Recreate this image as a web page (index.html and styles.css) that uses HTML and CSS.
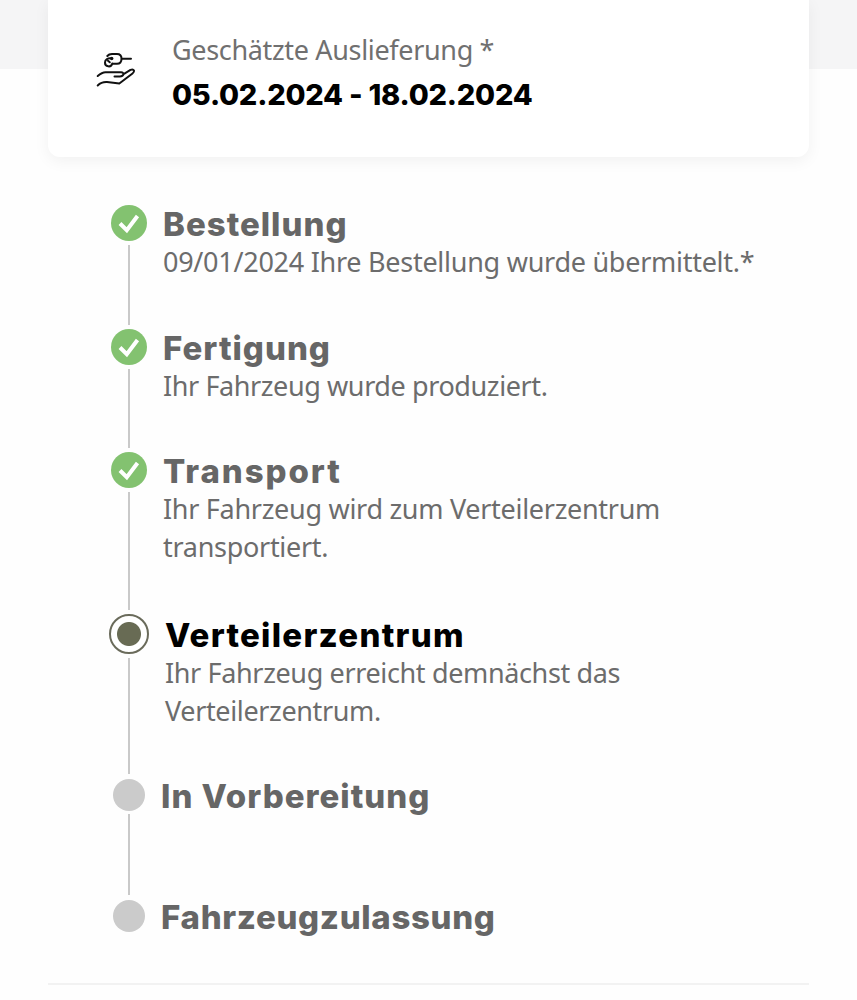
FILE: index.html
```html
<!DOCTYPE html>
<html lang="de">
<head>
<meta charset="utf-8">
<title>Bestellstatus</title>
<link rel="stylesheet" href="styles.css">
</head>
<body>
<header class="hero">
  <section class="card">
    <svg class="delivery-icon" viewBox="0 0 40 38" aria-hidden="true">
      <path d="M11.300 6Q13 4 16 4H21Q25.500 4 25.500 8.700Q25.500 13.700 21 13.700H17"/>
      <path d="M26 8.700H35M15.700 8.400C12 7.600 9 9.500 9 12.500A3.700 3.700 0 0 0 16.300 13.500M12 10.800L13.800 12.300"/>
      <circle class="solid" cx="15.700" cy="8.500" r="1.700"/>
      <path d="M1.700 26Q6 22.200 9.500 22.200H25Q27.800 22.300 27.300 24.600Q26.700 26.400 24 26.400H18.500M28 23.800L34.500 19.900Q37 18.800 38 20.500Q38.400 22 36.500 23.500L23.300 33.500L11 32.100Q5.500 31.800 1.700 35.500"/>
    </svg>
    <div class="estimate">
      <p class="label">Geschätzte Auslieferung *</p>
      <p class="dates">05.02.2024 - 18.02.2024</p>
    </div>
  </section>
</header>
<main class="steps">
  <article class="step done">
    <div class="rail"><span class="marker"><svg viewBox="0 0 36 36"><path d="M9 18.500L15.800 25.200L26.500 11"/></svg></span><i class="line"></i></div>
    <div class="copy"><h2 class="t1">Bestellung</h2><p class="p1">09/01/2024 Ihre Bestellung wurde übermittelt.*</p></div>
  </article>
  <article class="step done produced">
    <div class="rail"><span class="marker"><svg viewBox="0 0 36 36"><path d="M9 18.500L15.800 25.200L26.500 11"/></svg></span><i class="line"></i></div>
    <div class="copy"><h2 class="t2">Fertigung</h2><p class="p2">Ihr Fahrzeug wurde produziert.</p></div>
  </article>
  <article class="step done transport">
    <div class="rail"><span class="marker"><svg viewBox="0 0 36 36"><path d="M9 18.500L15.800 25.200L26.500 11"/></svg></span><i class="line"></i></div>
    <div class="copy"><h2 class="t3">Transport</h2><p class="p3">Ihr Fahrzeug wird zum Verteilerzentrum<br>transportiert.</p></div>
  </article>
  <article class="step current">
    <div class="rail"><span class="marker"></span><i class="line"></i></div>
    <div class="copy"><h2 class="t4">Verteilerzentrum</h2><p class="p4">Ihr Fahrzeug erreicht demnächst das<br>Verteilerzentrum.</p></div>
  </article>
  <article class="step pending">
    <div class="rail"><span class="marker"></span><i class="line"></i></div>
    <div class="copy"><h2 class="t5">In Vorbereitung</h2></div>
  </article>
  <article class="step pending last">
    <div class="rail"><span class="marker"></span></div>
    <div class="copy"><h2 class="t6">Fahrzeugzulassung</h2></div>
  </article>
</main>
</body>
</html>
```
FILE: styles.css
```css
* { box-sizing: border-box; }
body { margin: 0; height: 1000px; overflow: hidden; background: #fefefe; color: #666; font-family: "Noto Sans", sans-serif; }
h2, p { margin: 0; white-space: nowrap; }
.hero { height: 203px; padding: 0 48px; background: linear-gradient(#f5f5f6 69px, #fefefe 69px); }
.card { display: flex; height: 157px; padding: 31px 48px 0; border-radius: 0 0 12px 12px; background: #fff; box-shadow: 0 4px 16px rgba(0,0,0,.055); }
.delivery-icon { width: 40px; height: 38px; margin-top: 19px; fill: none; stroke: #111; stroke-width: 2; stroke-linecap: round; stroke-linejoin: round; }
.delivery-icon .solid { fill: #111; stroke: none; }
.estimate { margin-left: 36px; }
.label { color: #707070; font-size: 27px; line-height: 38px; letter-spacing: -.34px; }
.dates { margin-top: 7px; color: #000; font: 800 29px/38px Inter, sans-serif; letter-spacing: -.22px; }
.steps { height: 782px; margin: 0 48px; padding-left: 61px; border-bottom: 2px solid #f2f2f2; }
.step { display: flex; height: 123.500px; }
.transport { height: 164px; }
.current { height: 160.500px; }
.pending { height: 121.500px; }
.rail { display: flex; flex-direction: column; align-items: center; width: 40px; }
.marker { display: block; flex-shrink: 0; width: 36px; height: 36px; margin: 2px 0; border-radius: 50%; background: #83c270; }
.marker svg { display: block; fill: none; stroke: #fff; stroke-width: 4; }
.line { flex: 1; width: 2px; margin: 2px 0; background: #c9c9c9; }
.transport .line { margin-bottom: 4px; }
.current .marker { width: 40px; height: 40px; margin: 0; border: 2px solid #6a6b5b; background: #fff radial-gradient(circle, #686b54 11.500px, transparent 12.500px); }
.current .line { margin: 4px 0 1px; }
.pending .marker { width: 32px; height: 32px; margin: 4px 0; background: #cbcbcb; }
.pending .line { margin: -1px 0 1px; }
.copy { margin-left: 14px; }
.current .copy { margin-left: 16px; }
.pending .copy { margin-left: 12px; }
h2 { font: 800 33px/38px Inter, sans-serif; padding-top: 2px; letter-spacing: 1px; }
.copy p { color: #6c6c6c; font-size: 27px; line-height: 38px; }
.t3 { letter-spacing: 1.9px; }
.t4 { color: #000; letter-spacing: 1.28px; }
.t6 { letter-spacing: .67px; }
.p1 { letter-spacing: -.27px; }
.p2 { letter-spacing: -.4px; }
.p3 { letter-spacing: -.29px; }
.p4 { letter-spacing: -.36px; }
```
